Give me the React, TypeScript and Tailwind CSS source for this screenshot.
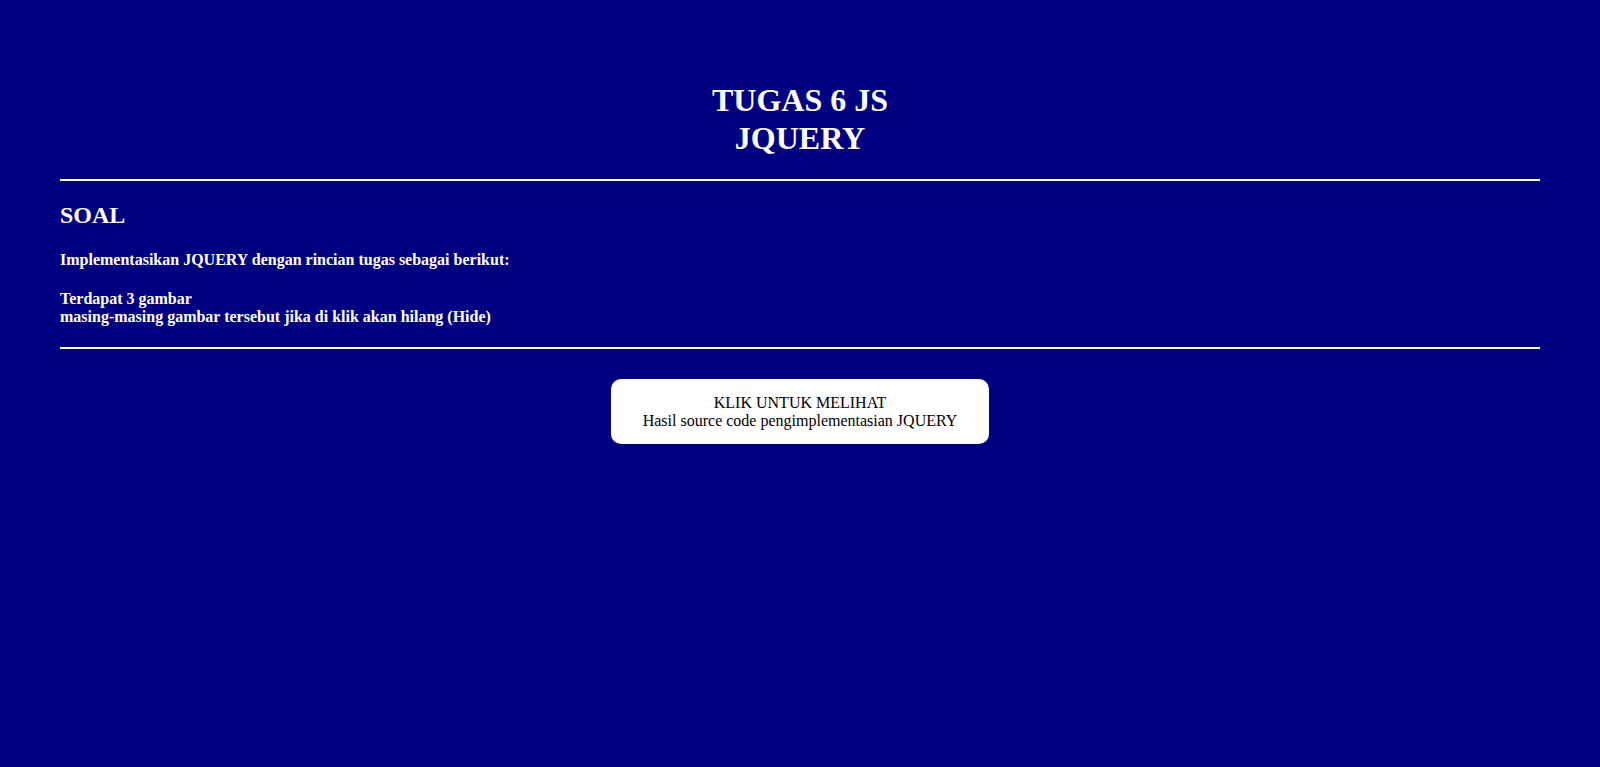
import React from "react";

const App = () => {
  return (
    <div className="min-h-[767px] bg-[#000080] px-[60px] pt-[60px] pb-10 text-white font-['Liberation_Serif','Times_New_Roman',serif]">
      <h1 className="mt-[21px] text-center text-[32px] font-bold leading-[38px]">
        TUGAS 6 JS
        <br />
        JQUERY
      </h1>
      <div className="mt-[22px] h-[2px] bg-white" />
      <h2 className="mt-[20px] text-[24px] font-bold leading-[28px]">SOAL</h2>
      <p className="mt-[22px] text-[16px] font-bold leading-[18.4px]">
        Implementasikan JQUERY dengan rincian tugas sebagai berikut:
      </p>
      <p className="mt-[21px] text-[16px] font-bold leading-[17.5px]">
        Terdapat 3 gambar
        <br />
        masing-masing gambar tersebut jika di klik akan hilang (Hide)
      </p>
      <div className="mt-[22px] h-[2px] bg-white" />
      <div className="mt-[30px] flex justify-center">
        <button className="flex h-[65px] w-[378px] flex-col items-center justify-center rounded-[10px] bg-white text-center text-[16px] leading-[18px] whitespace-nowrap text-black">
          <span>KLIK UNTUK MELIHAT</span>
          <span>Hasil source code pengimplementasian JQUERY</span>
        </button>
      </div>
    </div>
  );
};

export default App;
